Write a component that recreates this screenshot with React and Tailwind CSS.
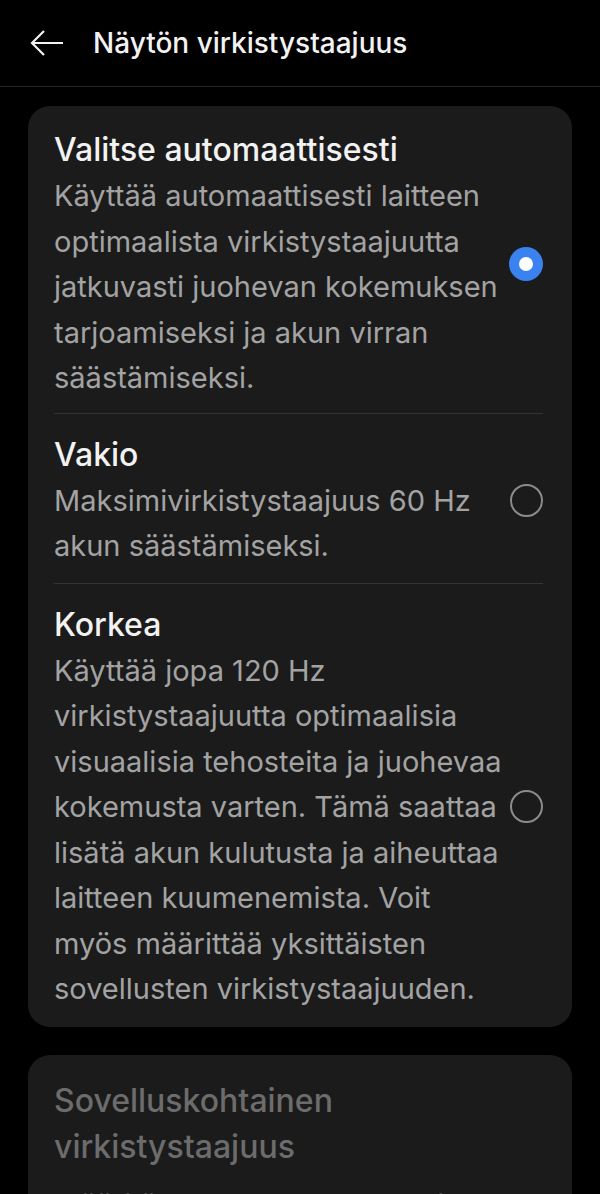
const options = [
  {
    title: "Valitse automaattisesti",
    lines: [
      "Käyttää automaattisesti laitteen",
      "optimaalista virkistystaajuutta",
      "jatkuvasti juohevan kokemuksen",
      "tarjoamiseksi ja akun virran",
      "säästämiseksi.",
    ],
    selected: true,
  },
  {
    title: "Vakio",
    lines: ["Maksimivirkistystaajuus 60 Hz", "akun säästämiseksi."],
    selected: false,
  },
  {
    title: "Korkea",
    lines: [
      "Käyttää jopa 120 Hz",
      "virkistystaajuutta optimaalisia",
      "visuaalisia tehosteita ja juohevaa",
      "kokemusta varten. Tämä saattaa",
      "lisätä akun kulutusta ja aiheuttaa",
      "laitteen kuumenemista. Voit",
      "myös määrittää yksittäisten",
      "sovellusten virkistystaajuuden.",
    ],
    selected: false,
  },
];

const Radio = ({ on }) =>
  on ? (
    <div className="w-[34px] h-[34px] rounded-full bg-[#3a82f0] flex items-center justify-center shrink-0">
      <div className="w-[14px] h-[14px] rounded-full bg-white" />
    </div>
  ) : (
    <div className="w-[33px] h-[33px] rounded-full border-2 border-[#8c8c8c] shrink-0" />
  );

export default function App() {
  return (
    <div
      className="w-[600px] h-[1194px] bg-black overflow-hidden"
      style={{ fontFamily: "Inter, 'Noto Sans', sans-serif" }}
    >
      <div className="h-[87px] flex items-center border-b border-[#262626]">
        <svg width="36" height="30" viewBox="0 0 36 30" className="ml-[29px]">
          <path d="M34 15H3M15 3L3 15l12 12" fill="none" stroke="#f2f2f2" strokeWidth="2.2" />
        </svg>
        <h1 className="ml-[28px] text-[28px] font-medium text-[#f2f2f2]">
          Näytön virkistystaajuus
        </h1>
      </div>

      <div className="mx-[28px] mt-[19px] bg-[#1b1b1b] rounded-[22px] pl-[26px] pr-[29px] pt-[1px] pb-[1px]">
        {options.map((o, i) => (
          <div
            key={o.title}
            className={`flex items-center ${i > 0 ? "border-t border-[#333333]" : ""} ${
              i === 0 ? "pt-[20px] pb-[12px]" : "pt-[18px] pb-[14px]"
            }`}
          >
            <div className="flex-1">
              <div className="text-[32px] leading-[46px] font-medium text-[#f2f2f2]">
                {o.title}
              </div>
              <div className="text-[29px] leading-[45.5px] text-[#a3a3a3]">
                {o.lines.map((l) => (
                  <div key={l} className="whitespace-nowrap">
                    {l}
                  </div>
                ))}
              </div>
            </div>
            <Radio on={o.selected} />
          </div>
        ))}
      </div>

      <div className="mx-[28px] mt-[28px] bg-[#1b1b1b] rounded-[22px] px-[26px] pt-[23px] pb-[20px]">
        <div className="text-[32px] leading-[46px] font-medium text-[#6c6c6c]">
          Sovelluskohtainen
          <br />
          virkistystaajuus
        </div>
        <div className="text-[29px] leading-[45.5px] text-[#555555] mt-[12px]">
          Määritä sovellusten oma taajuus
        </div>
      </div>
    </div>
  );
}
